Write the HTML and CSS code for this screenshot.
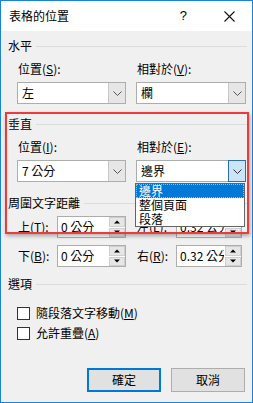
FILE: index.html
```html
<!DOCTYPE html>
<html lang="zh-Hant">
<head>
<meta charset="utf-8">
<link rel="stylesheet" href="styles.css">
</head>
<body>
<div class="win">
  <div class="titlebar">
    <span class="title">表格的位置</span>
    <span class="help">?</span>
    <svg class="close" width="11" height="11" viewBox="0 0 11 11"><path d="M0.5 0.5L10.5 10.5M10.5 0.5L0.5 10.5" stroke="#111" stroke-width="1.1" fill="none"/></svg>
  </div>
  <div class="body">
    <div class="ghead g1"><span>水平</span><i></i></div>
    <div class="pair">
      <div class="field">
        <div class="lbl">位置(<u>S</u>):</div>
        <div class="combo"><span class="val">左</span><b class="btn"><svg width="9" height="5" viewBox="0 0 9 5"><path d="M0.5 0.5L4.5 4.5L8.5 0.5" stroke="#555" fill="none"/></svg></b></div>
      </div>
      <div class="field">
        <div class="lbl">相對於(<u>V</u>):</div>
        <div class="combo"><span class="val">欄</span><b class="btn"><svg width="9" height="5" viewBox="0 0 9 5"><path d="M0.5 0.5L4.5 4.5L8.5 0.5" stroke="#555" fill="none"/></svg></b></div>
      </div>
    </div>
    <div class="ghead g2"><span>垂直</span><i></i></div>
    <div class="pair">
      <div class="field">
        <div class="lbl">位置(<u>I</u>):</div>
        <div class="combo"><span class="val">7 公分</span><b class="btn"><svg width="9" height="5" viewBox="0 0 9 5"><path d="M0.5 0.5L4.5 4.5L8.5 0.5" stroke="#555" fill="none"/></svg></b></div>
      </div>
      <div class="field">
        <div class="lbl">相對於(<u>E</u>):</div>
        <div class="combo"><span class="val">邊界</span><b class="btn active"><svg width="9" height="5" viewBox="0 0 9 5"><path d="M0.5 0.5L4.5 4.5L8.5 0.5" stroke="#333" fill="none"/></svg></b></div>
      </div>
    </div>
    <div class="ghead g3"><span>周圍文字距離</span><i></i></div>
    <div class="pair spinrow r1">
      <div class="sfield"><span class="slbl">上(<u>T</u>):</span><div class="spin"><span class="sval">0 公分</span><span class="sbtns"><b class="up"></b><b class="dn"></b></span></div></div>
      <div class="sfield"><span class="slbl">左(<u>L</u>):</span><div class="spin narrow"><span class="sval">0.32 公分</span><span class="sbtns"><b class="up"></b><b class="dn"></b></span></div></div>
    </div>
    <div class="pair spinrow r2">
      <div class="sfield"><span class="slbl">下(<u>B</u>):</span><div class="spin"><span class="sval">0 公分</span><span class="sbtns"><b class="up"></b><b class="dn"></b></span></div></div>
      <div class="sfield"><span class="slbl">右(<u>R</u>):</span><div class="spin narrow"><span class="sval">0.32 公分</span><span class="sbtns"><b class="up"></b><b class="dn"></b></span></div></div>
    </div>
    <div class="ghead g4"><span>選項</span><i></i></div>
    <label class="check c1"><span class="box"></span><span>隨段落文字移動(<u>M</u>)</span></label>
    <label class="check c2"><span class="box"></span><span>允許重疊(<u>A</u>)</span></label>
    <div class="buttons">
      <span class="button default">確定</span>
      <span class="button">取消</span>
    </div>
  </div>
  <div class="highlight"></div>
  <div class="dropdown">
    <div class="item sel">邊界</div>
    <div class="item">整個頁面</div>
    <div class="item">段落</div>
  </div>
</div>
</body>
</html>
```
FILE: styles.css
```css
html, body {
  margin: 0;
  padding: 0;
}
body {
  font-family: "Noto Sans CJK TC", "Noto Sans", sans-serif;
  font-size: 12px;
  color: #000;
  background: #fff;
}
u { text-decoration: underline; text-underline-offset: 1px; }

.win {
  position: relative;
  width: 253px;
  height: 403px;
  box-sizing: border-box;
  border: 1px solid #1883d7;
  background: #f0f0f0;
  display: flex;
  flex-direction: column;
}

.titlebar {
  height: 30px;
  flex: none;
  background: #fff;
  display: flex;
  align-items: center;
  padding-left: 8px;
}
.title { flex: 1; line-height: 14px; }
.help {
  font-family: "Liberation Sans", sans-serif;
  font-size: 13px;
  line-height: 14px;
  margin-right: 37px;
}
.close { margin-right: 17px; }

.body {
  flex: 1;
  display: flex;
  flex-direction: column;
  padding: 0 7px 10px 7px;
}

.ghead {
  display: flex;
  align-items: center;
  height: 14px;
  line-height: 14px;
}
.ghead i {
  flex: 1;
  height: 1px;
  background: #dcdcdc;
  margin-left: 4px;
  margin-right: -2px;
}
.g1 { margin-top: 8px; }
.g2 { margin-top: 13px; }
.g3 { margin-top: 14px; }
.g4 { margin-top: 10px; }

.pair {
  display: grid;
  grid-template-columns: 109px 110px;
  column-gap: 10px;
  padding-left: 9px;
}
.lbl {
  line-height: 14px;
  padding-left: 1px;
  margin-top: 9px;
}
.combo {
  margin-top: 6px;
  height: 22px;
  box-sizing: border-box;
  border: 1px solid #adadad;
  background: #fff;
  display: flex;
}
.combo .val {
  flex: 1;
  padding-left: 4px;
  line-height: 20px;
}
.combo .btn {
  width: 17px;
  box-sizing: border-box;
  background: #e6e6e6;
  border-left: 1px solid #c8c8c8;
  display: flex;
  align-items: center;
  justify-content: center;
}
.combo .btn.active {
  background: #cce4f7;
  border: 1px solid #2c6fad;
  margin: -1px -1px -1px 0;
  width: 18px;
}

.spinrow { grid-template-columns: 109px 110px; }
.r1 { margin-top: 6px; }
.r2 { margin-top: 7px; }
.sfield {
  display: flex;
  align-items: center;
}
.slbl {
  width: 39px;
  padding-left: 1px;
  line-height: 14px;
}
.spin {
  width: 69px;
  height: 22px;
  box-sizing: border-box;
  border: 1px solid #adadad;
  background: #fff;
  display: flex;
  overflow: hidden;
}
.spin.narrow { width: 66px; }
.sval {
  flex: 1;
  min-width: 0;
  padding-left: 3px;
  line-height: 20px;
  white-space: nowrap;
  overflow: hidden;
}
.sbtns {
  width: 16px;
  flex: none;
  display: flex;
  flex-direction: column;
  gap: 1px;
  padding: 0 0 0 1px;
  background: #fff;
}
.sbtns b {
  flex: 1;
  background: #e6e6e6;
  border: 1px solid #cfcfcf;
  position: relative;
}
.sbtns b::after {
  content: "";
  position: absolute;
  left: 50%;
  top: 50%;
  width: 0;
  height: 0;
  border-left: 3px solid transparent;
  border-right: 3px solid transparent;
  transform: translate(-50%, -50%);
}
.sbtns .up::after { border-bottom: 3px solid #000; }
.sbtns .dn::after { border-top: 3px solid #000; }

.check {
  display: flex;
  align-items: center;
  padding-left: 9px;
  height: 14px;
  line-height: 14px;
}
.c1 { margin-top: 15px; }
.c2 { margin-top: 6px; }
.check .box {
  width: 13px;
  height: 13px;
  box-sizing: border-box;
  border: 1px solid #333;
  background: #fff;
  margin-right: 6px;
}

.buttons {
  margin-top: auto;
  display: flex;
  justify-content: flex-end;
  gap: 10px;
}
.button {
  width: 74px;
  height: 24px;
  box-sizing: border-box;
  border: 1px solid #adadad;
  background: #e1e1e1;
  display: flex;
  align-items: center;
  justify-content: center;
  line-height: 14px;
}
.button.default { border: 2px solid #0078d7; }

.highlight {
  position: absolute;
  left: 4px;
  top: 111px;
  width: 244px;
  height: 122px;
  box-sizing: border-box;
  border: 2px solid #ef3a3a;
  box-shadow: 1px 2px 4px rgba(0, 0, 0, 0.3);
  pointer-events: none;
}

.dropdown {
  position: absolute;
  left: 134px;
  top: 182px;
  width: 110px;
  box-sizing: border-box;
  border: 1px solid #646464;
  background: #fff;
}
.item {
  height: 14px;
  line-height: 14px;
  padding-left: 3px;
}
.item.sel {
  background: #0078d7;
  color: #fff;
  outline: 1px dotted #f5a55a;
  outline-offset: -1px;
}
```
